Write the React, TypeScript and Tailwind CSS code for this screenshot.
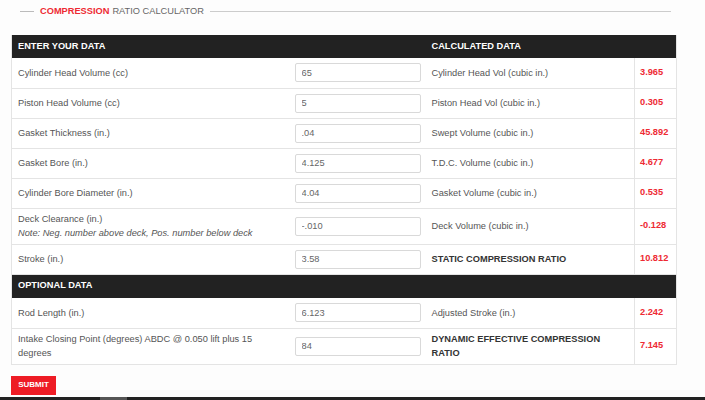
const inputs = [
  { label: "Cylinder Head Volume (cc)", value: "65", calc: "Cylinder Head Vol (cubic in.)", result: "3.965" },
  { label: "Piston Head Volume (cc)", value: "5", calc: "Piston Head Vol (cubic in.)", result: "0.305" },
  { label: "Gasket Thickness (in.)", value: ".04", calc: "Swept Volume (cubic in.)", result: "45.892" },
  { label: "Gasket Bore (in.)", value: "4.125", calc: "T.D.C. Volume (cubic in.)", result: "4.677" },
  { label: "Cylinder Bore Diameter (in.)", value: "4.04", calc: "Gasket Volume (cubic in.)", result: "0.535" },
]

function Field({ value }: { value: string }) {
  return (
    <input
      readOnly
      value={value}
      className="w-[126px] h-[19px] border border-[#d9d9d9] rounded-[2px] bg-white px-[6px] text-[9.25px] text-[#666] outline-none"
    />
  )
}

function Row({
  label,
  note,
  value,
  calc,
  bold,
  result,
  h,
}: {
  label: string
  note?: string
  value: string
  calc: string
  bold?: boolean
  result: string
  h: string
}) {
  return (
    <tr className={`${h} border-b border-[#e4e4e4]`}>
      <td className="pl-[6px] pr-[12px] align-middle">
        <div className="leading-[14px]">{label}</div>
        {note && <div className="italic leading-[14px]">{note}</div>}
      </td>
      <td className="px-[6px] align-middle">
        <Field value={value} />
      </td>
      <td
        className={`pl-[6px] pr-[16px] align-middle leading-[14px] ${
          bold ? "font-bold text-[#333]" : ""
        }`}
      >
        {calc}
      </td>
      <td className="pl-[5px] border-l border-[#e4e4e4] align-middle font-bold text-[#ee2a33]">
        {result}
      </td>
    </tr>
  )
}

export default function App() {
  return (
    <div className="w-[705px] h-[400px] bg-[#fdfdfd] flex flex-col font-['Liberation_Sans',Arial,sans-serif] text-[9.25px] text-[#555] overflow-hidden">
      <div className="flex items-center h-[23px] pl-[20px] pr-[34px]">
        <div className="w-[14px] h-px bg-[#bbb]" />
        <span className="ml-[6px] font-bold text-[#ee2a33]">COMPRESSION</span>
        <span className="ml-[3px] text-[#666]">RATIO CALCULATOR</span>
        <div className="ml-[6px] flex-1 h-px bg-[#ccc]" />
      </div>
      <div className="pl-[11px] pt-[12px]">
        <table className="w-[665px] border-collapse table-fixed border-l border-r border-[#e4e4e4] bg-white">
          <colgroup>
            <col className="w-[277px]" />
            <col className="w-[137px]" />
            <col className="w-[209px]" />
            <col className="w-[42px]" />
          </colgroup>
          <tbody>
            <tr className="h-[23px] bg-[#222] text-white font-bold">
              <td colSpan={2} className="px-[6px]">ENTER YOUR DATA</td>
              <td colSpan={2} className="px-[6px]">CALCULATED DATA</td>
            </tr>
            {inputs.map((r) => (
              <Row key={r.label} {...r} h="h-[30px]" />
            ))}
            <Row
              label="Deck Clearance (in.)"
              note="Note: Neg. number above deck, Pos. number below deck"
              value="-.010"
              calc="Deck Volume (cubic in.)"
              result="-0.128"
              h="h-[36px]"
            />
            <Row label="Stroke (in.)" value="3.58" calc="STATIC COMPRESSION RATIO" bold result="10.812" h="h-[30px]" />
            <tr className="h-[24px] bg-[#222] text-white font-bold">
              <td colSpan={4} className="px-[6px]">OPTIONAL DATA</td>
            </tr>
            <Row label="Rod Length (in.)" value="6.123" calc="Adjusted Stroke (in.)" result="2.242" h="h-[30px]" />
            <Row
              label="Intake Closing Point (degrees) ABDC @ 0.050 lift plus 15 degrees"
              value="84"
              calc="DYNAMIC EFFECTIVE COMPRESSION RATIO"
              bold
              result="7.145"
              h="h-[36px]"
            />
          </tbody>
        </table>
        <button className="mt-[11px] w-[45px] h-[19px] bg-[#ee1c25] text-white text-[8px] font-bold">SUBMIT</button>
      </div>
      <div className="mt-auto h-[3px] bg-[#222] flex">
        <div className="ml-[100px] w-[27px] bg-[#555]" />
      </div>
    </div>
  )
}
